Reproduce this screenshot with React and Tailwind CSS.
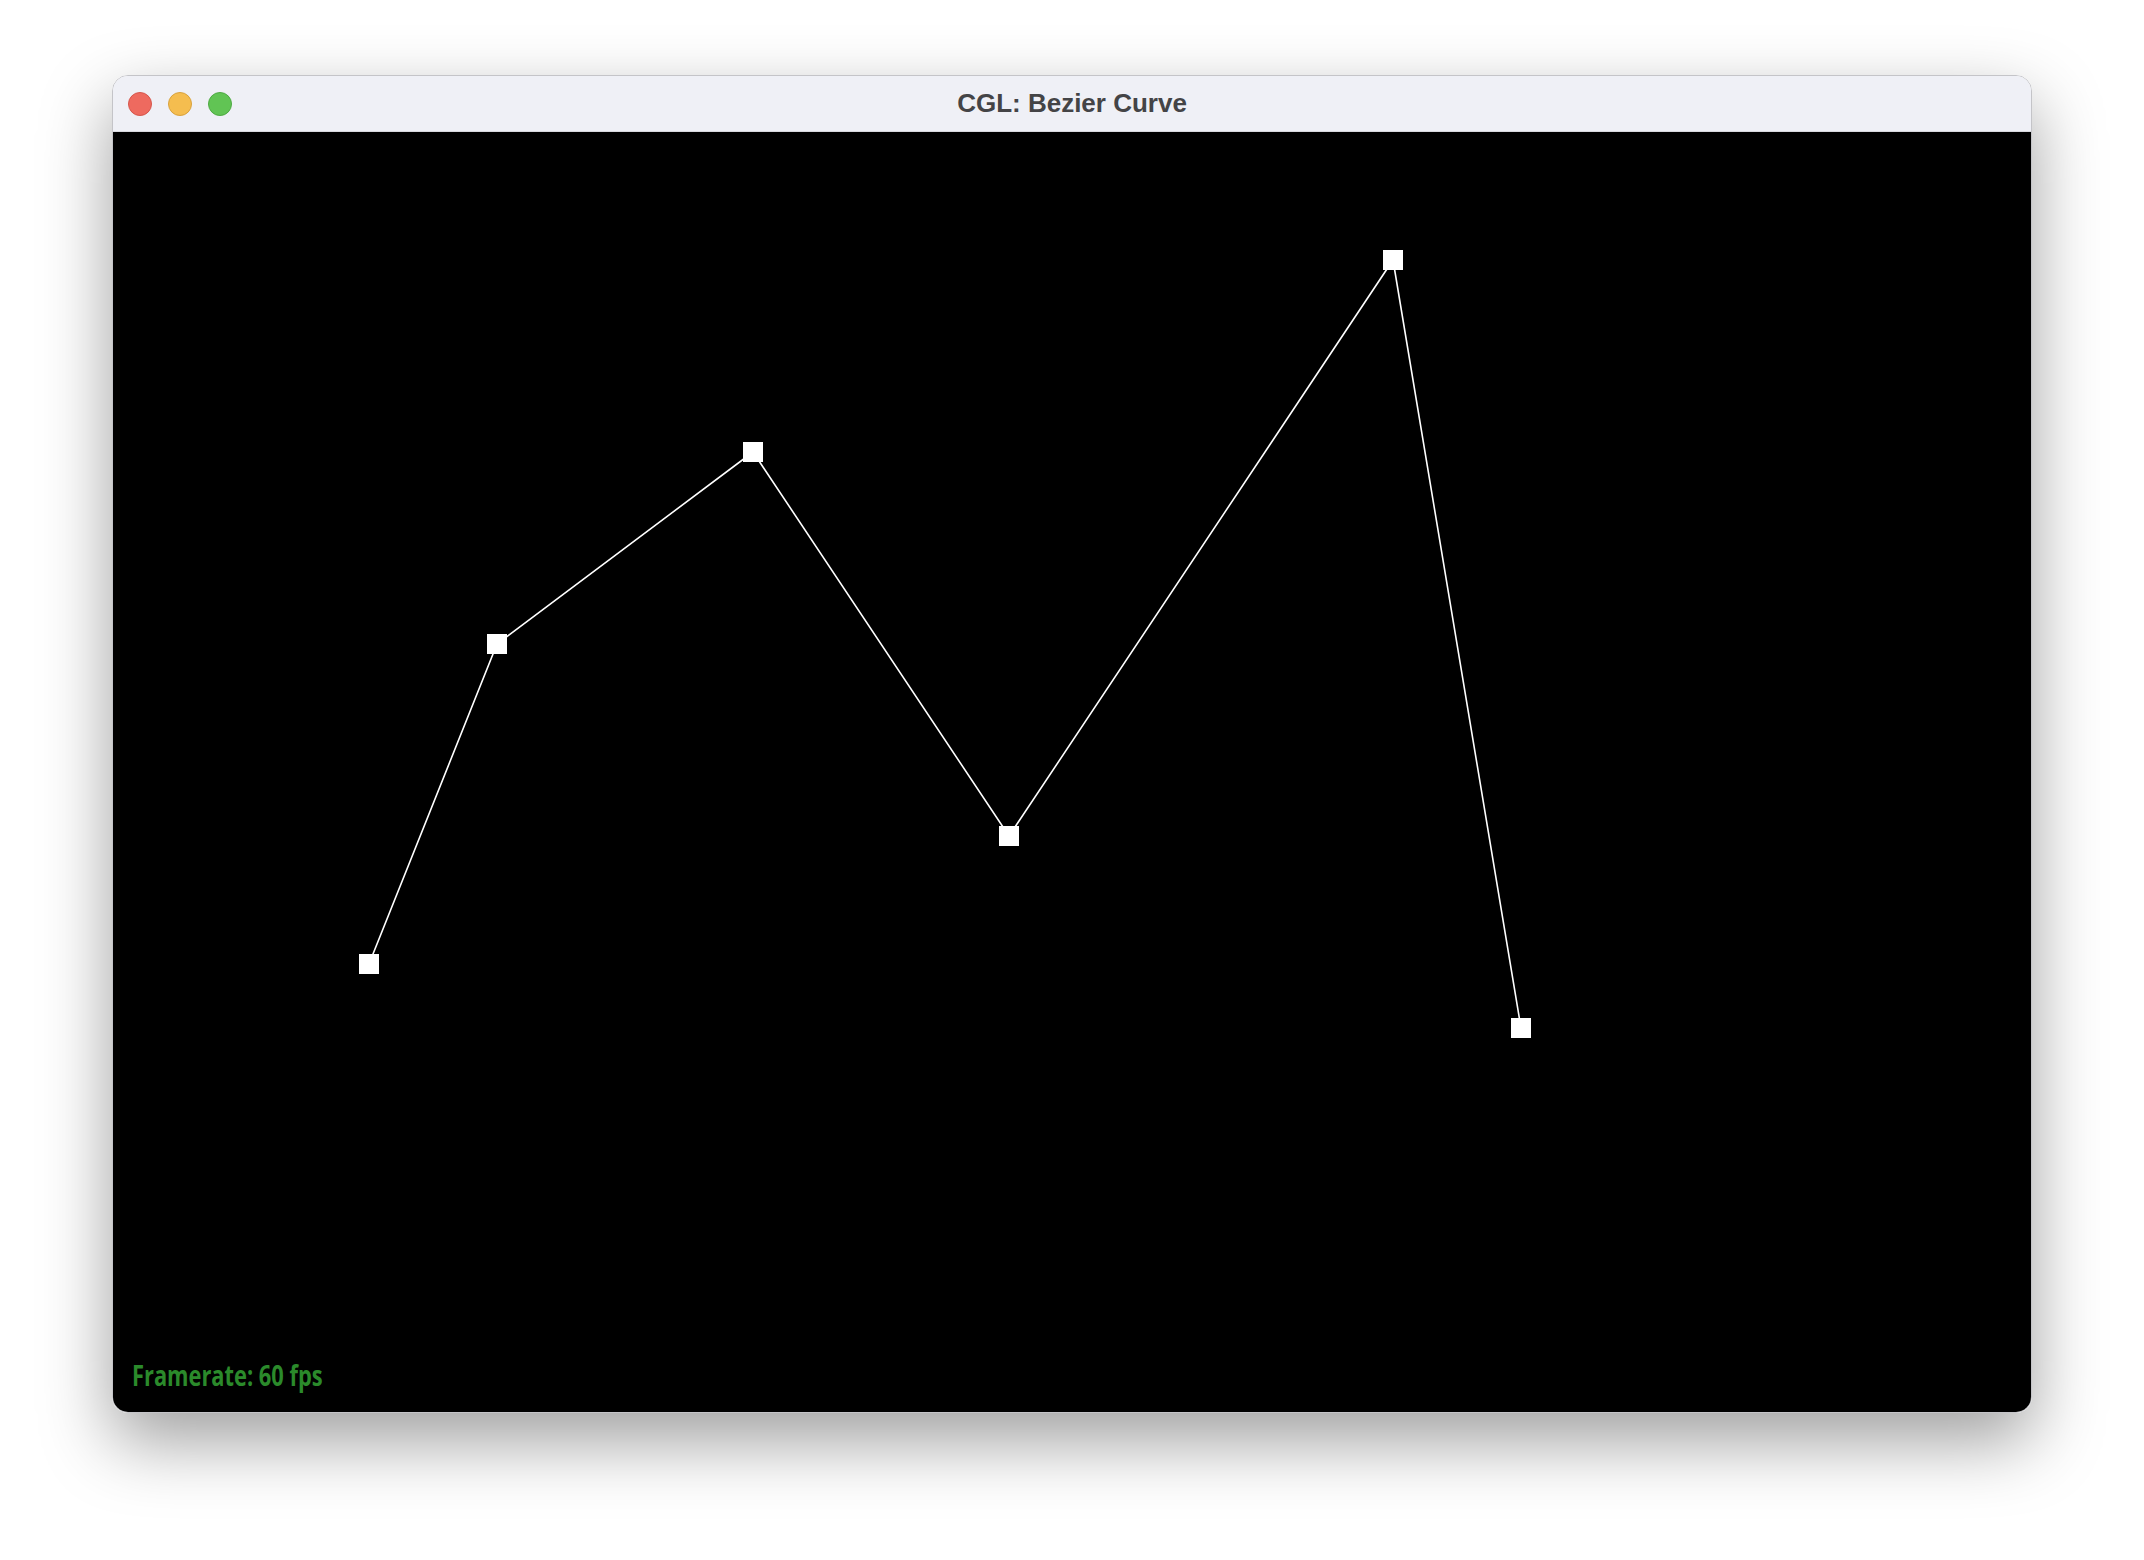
import React from 'react';

// control polygon of the curve, in canvas pixels
const points = [
  [256, 832],
  [384, 512],
  [640, 320],
  [896, 704],
  [1280, 128],
  [1408, 896],
];

function TrafficLights() {
  return (
    <div className="flex items-center gap-4 pl-[15px]">
      <span className="w-6 h-6 rounded-full bg-[#ee6a5f] border border-[#d6564c]" />
      <span className="w-6 h-6 rounded-full bg-[#f5bd4f] border border-[#d9a23d]" />
      <span className="w-6 h-6 rounded-full bg-[#61c454] border border-[#4eaa43]" />
    </div>
  );
}

function BezierCanvas() {
  const poly = points.map(([x, y]) => `${x},${y}`).join(' ');
  return (
    <div className="relative w-[1920px] h-[1280px] bg-black">
      <svg width="1920" height="1280" viewBox="0 0 1920 1280" className="block">
        <polyline points={poly} fill="none" stroke="#ffffff" strokeWidth="1.6" />
        {points.map(([x, y], i) => (
          <rect key={i} x={x - 10} y={y - 10} width="20" height="20" fill="#ffffff" />
        ))}
      </svg>
      {/* fps overlay */}
      <div className="absolute left-[19px] bottom-[23px] origin-left scale-x-[0.78] font-['Open_Sans',sans-serif] font-bold text-[28px] leading-none text-[#2b8a2b] whitespace-nowrap">
        Framerate: 60 fps
      </div>
    </div>
  );
}

export default function App() {
  return (
    <div className="w-[2144px] h-[1560px] bg-white pt-[75px] pl-[112px]">
      <div className="w-[1920px] rounded-[16px] overflow-hidden border border-[#c4c4c8] shadow-[0_28px_70px_rgba(0,0,0,0.38)] flex flex-col">
        <div className="relative h-[56px] bg-[#eff0f6] flex items-center border-b border-[#d8d8de]">
          <TrafficLights />
          <div className="absolute inset-0 flex items-center justify-center font-['Liberation_Sans',Arial,sans-serif] font-bold text-[26px] text-[#444446]">
            CGL: Bezier Curve
          </div>
        </div>
        <BezierCanvas />
      </div>
    </div>
  );
}
